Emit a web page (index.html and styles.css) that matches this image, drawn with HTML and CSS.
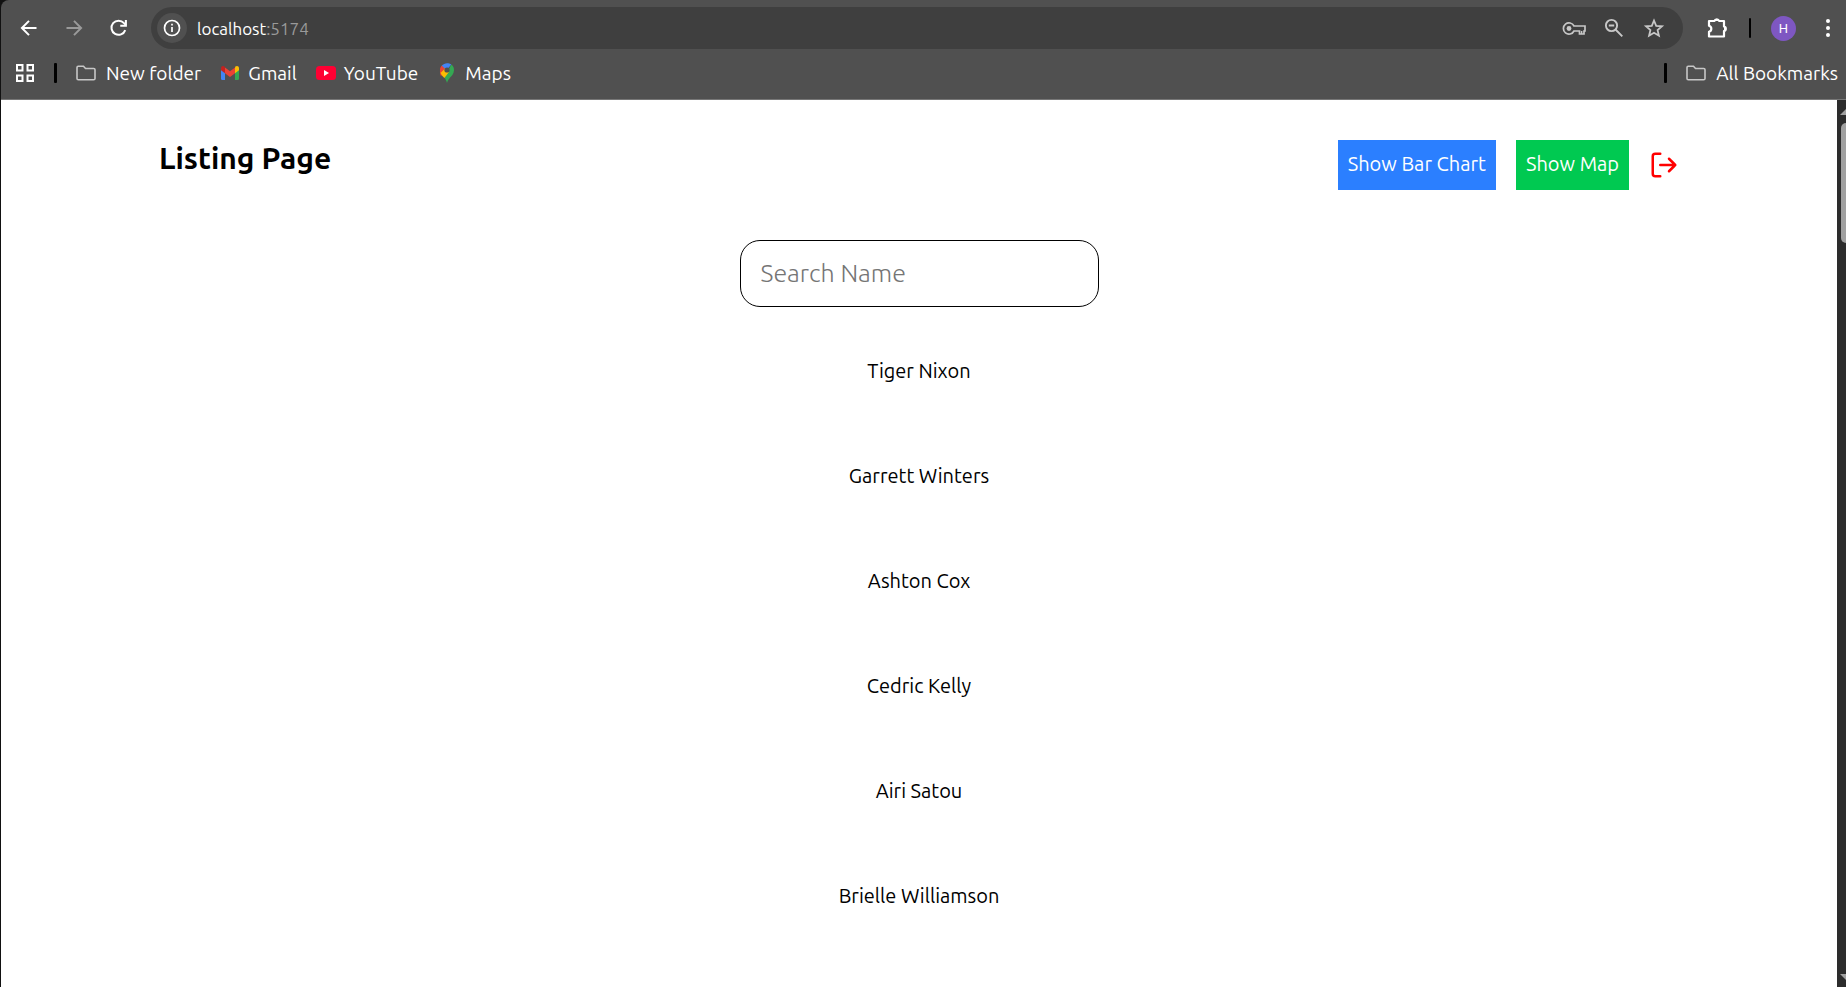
FILE: index.html
```html
<!DOCTYPE html>
<html lang="en">
<head>
<meta charset="utf-8">
<title>Listing Page</title>
<link rel="stylesheet" href="styles.css">
</head>
<body>
<div class="window">
  <header class="chrome">
    <div class="toolbar">
      <nav class="nav-buttons" aria-label="History">
        <button class="icon-button" aria-label="Back"><svg class="icon" viewBox="0 0 24 24"><path d="M21 12H4M12 3.500L3.500 12l8.500 8.500" fill="none" stroke="currentColor" stroke-width="2.400"/></svg></button>
        <button class="icon-button dim" aria-label="Forward"><svg class="icon" viewBox="0 0 24 24"><path d="M3 12h17M12 3.500L20.500 12 12 20.500" fill="none" stroke="currentColor" stroke-width="2.400"/></svg></button>
        <button class="icon-button" aria-label="Reload"><svg class="icon" viewBox="0 0 24 24"><path d="M19.500 14.500A8.500 8.500 0 1 1 18 6.200L20.200 8.500" fill="none" stroke="currentColor" stroke-width="2.400"/><path d="M21.500 2.500v8h-8V8h5.500V2.500z" fill="currentColor"/></svg></button>
      </nav>
      <div class="omnibox">
        <button class="site-info" aria-label="Site information"><svg class="icon-small" viewBox="0 0 20 20"><circle cx="10" cy="10" r="7.500" fill="none" stroke="currentColor" stroke-width="1.700"/><path d="M10 9v5M10 5.800v1.800" stroke="currentColor" stroke-width="1.700"/></svg></button>
        <span class="address">localhost<span class="port">:5174</span></span>
        <div class="omnibox-actions">
          <button class="icon-button" aria-label="Passwords"><svg class="icon" viewBox="0 0 24 24"><path d="M12 10A5.600 5.600 0 1 0 12 15h5.500v3h4.500v-3h1v-5z" fill="none" stroke="currentColor" stroke-width="1.700"/><circle cx="7" cy="12.500" r="2.400" fill="currentColor"/><path d="M19.600 18v-3" stroke="currentColor" stroke-width="1.500"/></svg></button>
          <button class="icon-button" aria-label="Zoom"><svg class="icon" viewBox="0 0 24 24"><circle cx="9.500" cy="9.500" r="5.600" fill="none" stroke="currentColor" stroke-width="1.900"/><path d="M13.500 13.500l6.800 6.800M6.800 9.500h5.400" stroke="currentColor" stroke-width="1.900"/></svg></button>
          <button class="icon-button" aria-label="Bookmark this tab"><svg class="icon" viewBox="0 0 24 24"><path d="M12 4.500l2.200 5.300 5.800.5-4.400 3.800 1.300 5.600-4.900-3-4.900 3 1.300-5.600L4 10.300l5.800-.5z" fill="none" stroke="currentColor" stroke-width="1.800"/></svg></button>
        </div>
      </div>
      <div class="toolbar-end">
        <button class="icon-button" aria-label="Extensions"><svg class="icon" viewBox="0 0 24 24"><path d="M4 5h5.500a2.400 2.400 0 0 1 4.600 0H19v5.500a2.300 2.300 0 0 1 0 4.500v5.500H4V15.800a3.100 3.100 0 0 0 0-6z" fill="none" stroke="currentColor" stroke-width="2.200" stroke-linejoin="round"/><path d="M9.500 5a2.400 2.400 0 0 1 4.600 0zM19 10.500a2.300 2.300 0 0 1 0 4.500z" fill="currentColor"/></svg></button>
        <span class="divider thin"></span>
        <button class="avatar" aria-label="Profile">H</button>
        <button class="icon-button" aria-label="Menu"><svg class="icon" viewBox="0 0 24 24"><g fill="currentColor"><circle cx="12" cy="5" r="2"/><circle cx="12" cy="12" r="2"/><circle cx="12" cy="19" r="2"/></g></svg></button>
      </div>
    </div>
    <nav class="bookmarks" aria-label="Bookmarks">
      <button class="icon-button" aria-label="Apps"><svg class="icon-small" viewBox="0 0 20 20"><g fill="none" stroke="currentColor" stroke-width="2"><path d="M2 2h5.500v5.500H2zM12.500 2H18v5.500h-5.500zM2 12.500h5.500V18H2zM12.500 12.500H18V18h-5.500z"/></g></svg></button>
      <span class="divider"></span>
      <a class="bookmark" href="#"><svg class="icon-small folder" viewBox="0 0 20 20"><path d="M1 4.500q0-1.200 1.200-1.200H7.500l2 2.200h8.200q1.300 0 1.300 1.300v8.700q0 1.300-1.300 1.300H2.300q-1.300 0-1.300-1.300z" fill="none" stroke="currentColor" stroke-width="1.600"/></svg>New folder</a>
      <a class="bookmark" href="#"><svg class="icon-small" viewBox="0 0 20 20"><path d="M1 5v10.500Q1 17 2.400 17H5V8z" fill="#4285f4"/><path d="M15 8v9h2.600Q19 17 19 15.500V5z" fill="#34a853"/><path d="M15 5v5.200l4-3V5.200C19 3 16.800 2.500 15.300 3.600z" fill="#fbbc04"/><path d="M5 10.200V4.500l5 3.800 5-3.800v5.700L10 14z" fill="#ea4335"/><path d="M1 5.200v2l4 3V4.500l-.5-.9C3 2.500 1 3.200 1 5.200z" fill="#c5221f"/></svg>Gmail</a>
      <a class="bookmark" href="#"><svg class="icon-small" viewBox="0 0 20 20"><rect y="3" width="20" height="14" rx="3.500" fill="#ff0033"/><path d="M8 7v6l5-3z" fill="#fff"/></svg>YouTube</a>
      <a class="bookmark" href="#"><svg class="icon-small" viewBox="0 0 20 20"><path d="M4.700 2.800L10 7.200 4 13C2.500 10.500 2.500 5.500 4.700 2.800z" fill="#ea4335"/><path d="M4.700 2.800C7-.2 11.500-.5 14.300 1.600L8 9z" fill="#4285f4"/><path d="M14.300 1.600c2.500 1.700 3.400 5 2.200 8.100C15.200 13.200 11.500 15 10 20c-.7-2.300-1.500-3.800-2.600-5.200z" fill="#34a853"/><path d="M3.400 9.500L8 5l4 4-4.600 6C5.600 13.200 4.200 11.700 3.400 9.500z" fill="#fbbc04"/><path d="M3 7.500c0-1.800.6-3.500 1.700-4.700L8 5.500 3.500 10z" fill="#ea4335"/><circle cx="10" cy="7" r="2.600" fill="#505050"/></svg>Maps</a>
      <span class="divider last"></span>
      <a class="bookmark" href="#"><svg class="icon-small folder" viewBox="0 0 20 20"><path d="M1 4.500q0-1.200 1.200-1.200H7.500l2 2.200h8.200q1.300 0 1.300 1.300v8.700q0 1.300-1.300 1.300H2.300q-1.300 0-1.300-1.300z" fill="none" stroke="currentColor" stroke-width="1.600"/></svg>All Bookmarks</a>
    </nav>
  </header>
  <div class="viewport">
    <main class="page">
      <div class="page-header">
        <h1 class="title">Listing Page</h1>
        <div class="actions">
          <button class="action chart">Show Bar Chart</button>
          <button class="action map">Show Map</button>
          <button class="logout" aria-label="Log out"><svg class="logout-icon" viewBox="0 0 24 24" fill="none" stroke="currentColor" stroke-width="2" stroke-linecap="round" stroke-linejoin="round"><path d="M9 21H5a2 2 0 0 1-2-2V5a2 2 0 0 1 2-2h4M16 17l5-5-5-5M21 12H9"/></svg></button>
        </div>
      </div>
      <input class="search" type="text" placeholder="Search Name" aria-label="Search Name">
      <ul class="names">
        <li class="name">Tiger Nixon</li>
        <li class="name">Garrett Winters</li>
        <li class="name">Ashton Cox</li>
        <li class="name">Cedric Kelly</li>
        <li class="name">Airi Satou</li>
        <li class="name">Brielle Williamson</li>
      </ul>
    </main>
    <div class="scrollbar">
      <svg class="scroll-arrow" viewBox="0 0 6 6"><path d="M0 6L6 0v6z" fill="#a0a0a0"/></svg>
      <div class="thumb"></div>
      <svg class="scroll-arrow" viewBox="0 0 6 6"><path d="M0 0L6 6V0z" fill="#a0a0a0"/></svg>
    </div>
  </div>
</div>
</body>
</html>
```
FILE: styles.css
```css
* {
  box-sizing: border-box;
}

body {
  margin: 0;
  background: #111;
  font-family: Ubuntu, "Noto Sans", sans-serif;
  font-size: 20px;
  color: #000;
}

button {
  border: 0;
  padding: 0;
  background: none;
  color: inherit;
  font: inherit;
}

svg {
  display: block;
}

.window {
  display: flex;
  flex-direction: column;
  height: 100vh;
  padding-left: 1px;
  overflow: hidden;
}

.chrome {
  background: #505050;
  border-bottom: 1px solid #777;
  border-top-left-radius: 8px;
  color: #fff;
}

.toolbar {
  display: flex;
  align-items: center;
  padding: 7px 6px 0 16px;
}

.nav-buttons {
  display: flex;
  gap: 21px;
  margin-right: 20px;
}

.icon-button {
  display: flex;
}

.icon {
  width: 24px;
  height: 24px;
}

.nav-buttons .icon {
  width: 20px;
  height: 20px;
}

.nav-buttons .icon-button {
  padding: 2px;
}

.dim {
  color: #9a9a9a;
}

.icon-small {
  width: 20px;
  height: 20px;
}

.omnibox {
  display: flex;
  flex: 1;
  align-items: center;
  height: 42px;
  padding: 0 17px 0 6px;
  border-radius: 21px;
  background: #3f3f3f;
}

.site-info {
  display: flex;
  align-items: center;
  justify-content: center;
  width: 30px;
  height: 30px;
  margin-right: 10px;
  border-radius: 50%;
  background: #505050;
}

.address {
  font-size: 17px;
}

.port {
  color: #9a9a9a;
}

.omnibox-actions {
  display: flex;
  gap: 16px;
  margin-left: auto;
  color: #c7c7c7;
}

.toolbar-end {
  display: flex;
  align-items: center;
  margin-left: 22px;
}

.divider {
  width: 3px;
  height: 20px;
  border-radius: 1px;
  background: #000;
}

.divider.thin {
  width: 2px;
  margin: 0 20px;
}

.avatar {
  width: 25px;
  height: 25px;
  margin-right: 20px;
  border-radius: 50%;
  background: #7e57c2;
  font: 13px Roboto, sans-serif;
}

.bookmarks {
  display: flex;
  align-items: center;
  height: 50px;
  padding: 0 8px 2px 14px;
  font-size: 19px;
}

.bookmarks .divider {
  margin: 0 19px;
}

.bookmarks .last {
  margin-left: auto;
}

.bookmark {
  display: flex;
  align-items: center;
  gap: 8px;
  color: inherit;
  text-decoration: none;
}

.bookmark + .bookmark {
  margin-left: 19px;
}

.folder {
  margin-right: 2px;
  color: #c7c7c7;
}

.viewport {
  display: flex;
  flex: 1;
  min-height: 0;
}

.page {
  display: flex;
  flex: 1;
  flex-direction: column;
  align-items: center;
  padding: 40px 158px 0;
  background: #fff;
}

.page-header {
  display: flex;
  align-items: flex-start;
  justify-content: space-between;
  width: 100%;
}

.title {
  margin: 0;
  font-size: 30px;
  font-weight: 600;
  line-height: 36px;
}

.actions {
  display: flex;
  align-items: center;
  gap: 20px;
}

.action {
  padding: 9px 10px 11px;
  color: #fff;
  line-height: 30px;
}

.chart {
  background: #2b7fff;
}

.map {
  background: #00c951;
}

.logout {
  color: #f00;
}

.logout-icon {
  width: 30px;
  height: 30px;
}

.search {
  width: 359px;
  height: 67px;
  margin-top: 50px;
  padding: 0 20px 2px;
  border: 1px solid #000;
  border-radius: 20px;
  background: #fff;
  font: 300 25px Ubuntu, "Noto Sans", sans-serif;
}

.search::placeholder {
  color: #757575;
}

.names {
  display: flex;
  flex-direction: column;
  gap: 75px;
  margin: 49px 0 0;
  padding: 0;
  list-style: none;
  text-align: center;
}

.name {
  line-height: 30px;
}

.scrollbar {
  display: flex;
  flex-direction: column;
  align-items: flex-end;
  width: 9px;
  padding: 9px 0 7px;
  background: #2c2c2c;
}

.scroll-arrow {
  width: 6px;
  height: 6px;
}

.thumb {
  width: 5px;
  height: 120px;
  margin: 8px 0 auto;
  border-radius: 5px 0 0 5px;
  background: #a0a0a0;
}
```
